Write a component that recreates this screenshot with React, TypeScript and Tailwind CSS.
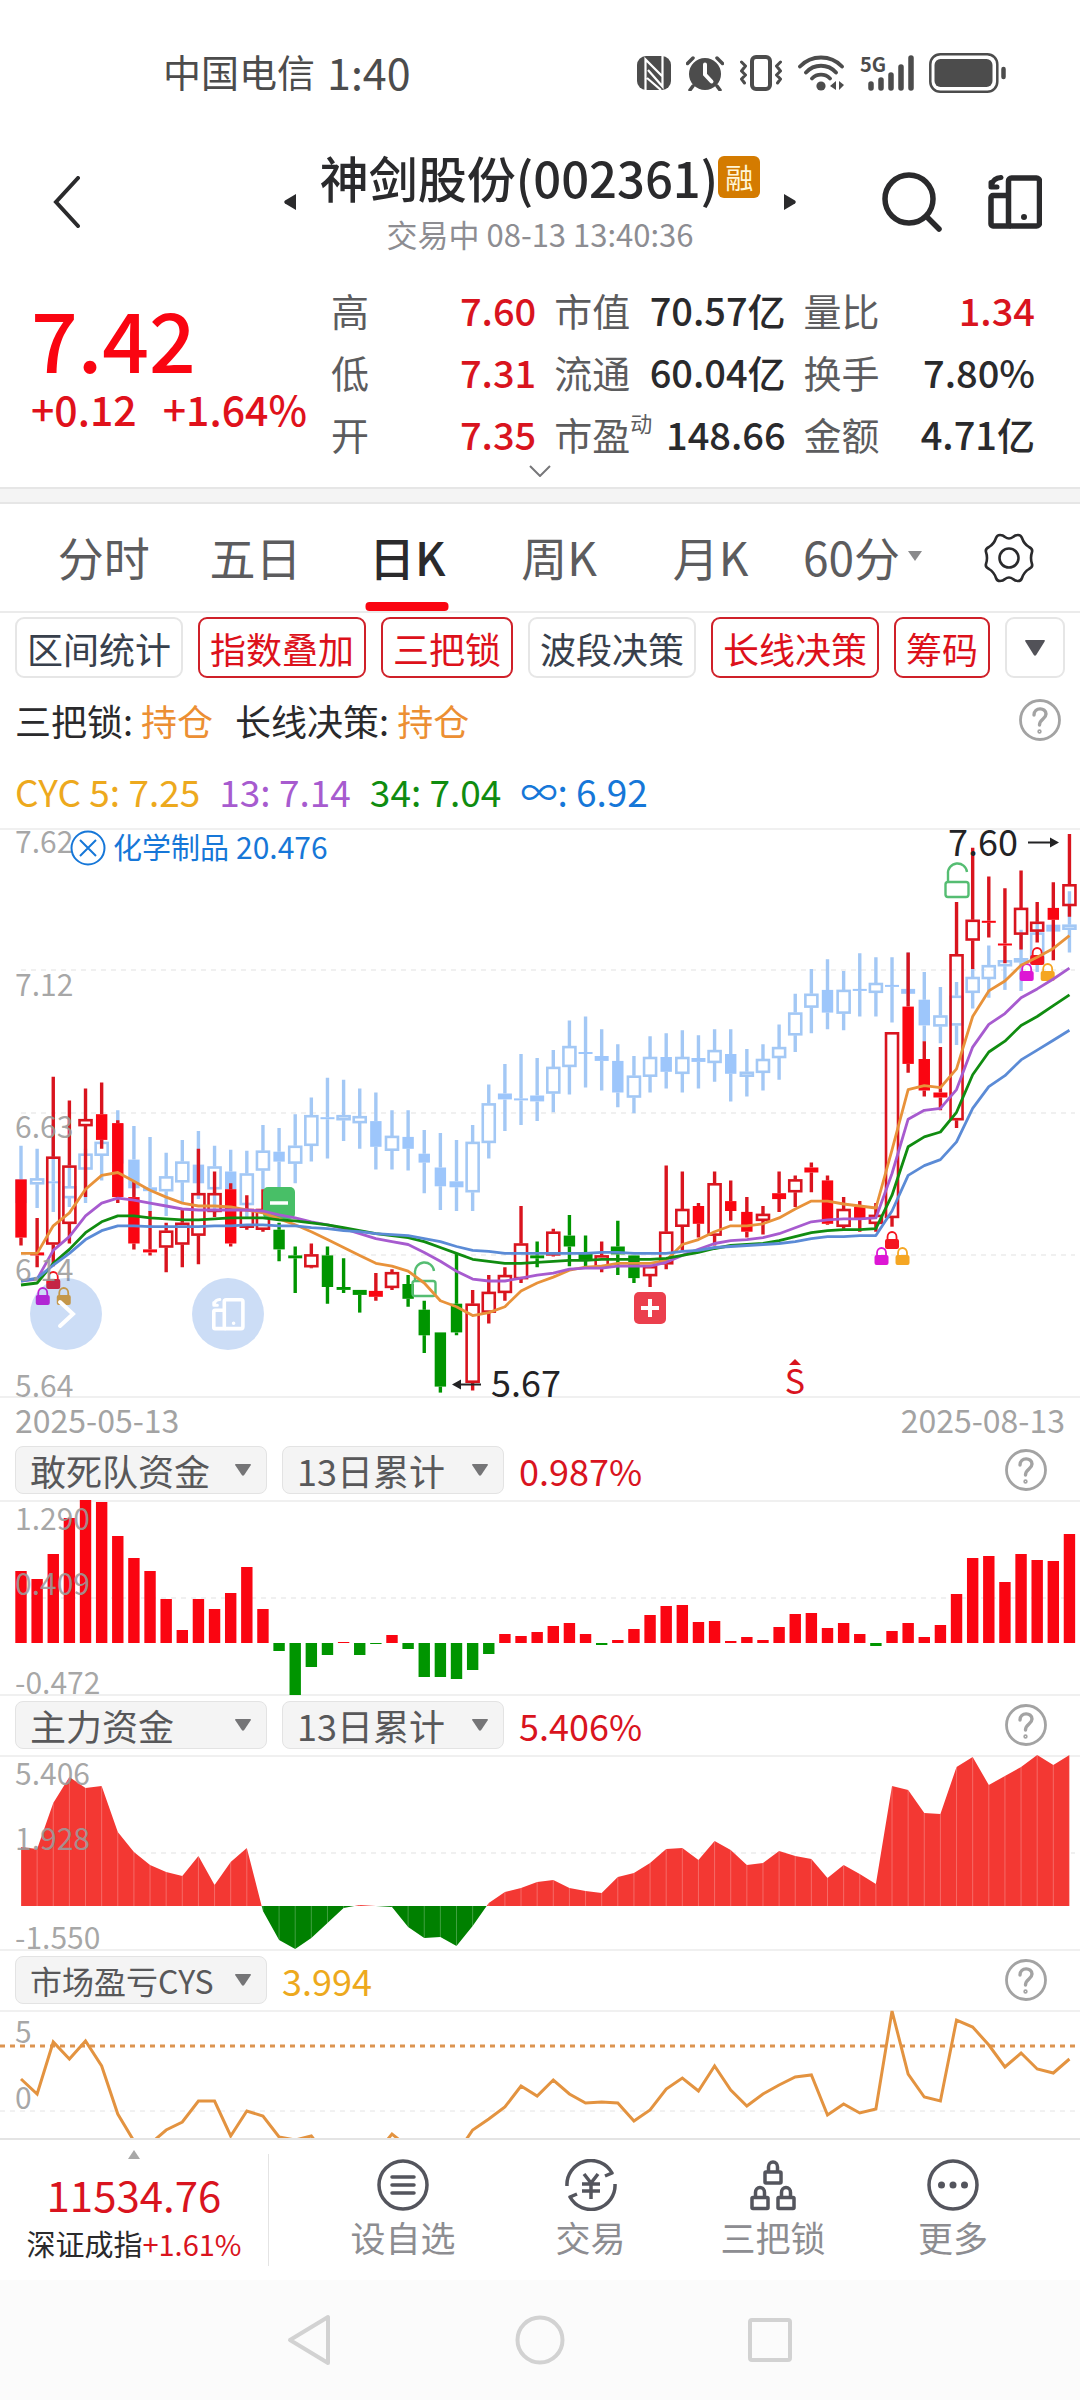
import React from "react";

const RED = "#d9141e";
const HOT = "#fa0511";
const GREEN = "#009500";
const PALE = "#9dc6fb";
const X0 = 21;
const STEP = 16.13;
const cx = (i: number) => X0 + STEP * i;
const PRICE_SCALE = 0.987;
const py = (v: number) => Math.round(v * PRICE_SCALE * 10) / 10;

type Kind = "h" | "f" | "g";
type Candle = [number, number, number, number, Kind];

const stock: Candle[] = [
  [356, 356, 415, 423, "f"], [395, 430, 433, 445, "f"], [252, 333, 422, 444, "h"], [276, 342, 401, 421, "h"],
  [264, 295, 302, 374, "h"], [258, 290, 316, 325, "f"], [296, 299, 374, 380, "f"], [358, 374, 421, 427, "f"],
  [388, 427, 430, 433, "f"], [400, 408, 425, 450, "h"], [386, 400, 422, 445, "h"], [325, 370, 413, 442, "h"],
  [348, 370, 389, 394, "h"], [360, 366, 421, 424, "f"], [372, 386, 405, 407, "h"], [366, 386, 407, 409, "h"],
  [400, 407, 427, 439, "g"], [424, 433, 436, 471, "g"], [421, 432, 445, 446, "h"], [424, 433, 465, 482, "g"],
  [436, 465, 468, 471, "g"], [468, 468, 473, 491, "g"], [451, 469, 475, 479, "f"], [447, 450, 466, 468, "h"],
  [453, 462, 477, 485, "g"], [479, 488, 514, 532, "g"], [511, 511, 566, 572, "g"], [431, 482, 511, 514, "g"],
  [468, 482, 562, 570, "h"], [453, 470, 491, 502, "h"], [445, 453, 471, 479, "h"], [383, 421, 457, 461, "h"],
  [419, 433, 436, 445, "g"], [406, 409, 433, 434, "h"], [392, 413, 424, 444, "g"], [413, 431, 437, 444, "g"],
  [419, 433, 445, 450, "h"], [398, 424, 432, 453, "g"], [433, 433, 456, 461, "g"], [443, 444, 454, 465, "h"],
  [342, 409, 442, 447, "h"], [348, 386, 404, 428, "h"], [380, 383, 401, 415, "f"], [348, 360, 413, 423, "h"],
  [357, 378, 388, 398, "f"], [374, 389, 409, 415, "f"], [383, 391, 398, 412, "h"], [348, 370, 376, 389, "f"],
  [352, 356, 369, 384, "h"], [339, 344, 349, 369, "f"], [352, 357, 401, 402, "f"], [374, 386, 404, 406, "h"],
  [378, 384, 397, 409, "f"], [380, 392, 401, 409, "h"], [207, 207, 395, 404, "h"], [126, 181, 239, 248, "f"],
  [216, 234, 266, 272, "f"], [222, 268, 273, 286, "f"], [75, 128, 296, 304, "h"], [20, 93, 114, 143, "h"],
  [49, 94, 96, 111, "f"], [61, 117, 119, 137, "f"], [43, 81, 108, 123, "h"], [75, 95, 105, 116, "h"],
  [55, 81, 93, 134, "f"], [6, 57, 79, 90, "h"],
];

const sector: Candle[] = [
  [322, 356, 380, 400, "f"], [325, 355, 361, 385, "h"], [300, 358, 360, 389, "f"], [340, 363, 375, 384, "h"],
  [325, 330, 346, 380, "h"], [312, 318, 332, 357, "h"], [286, 300, 340, 360, "f"], [302, 336, 365, 372, "f"],
  [313, 364, 368, 389, "f"], [329, 353, 368, 393, "h"], [316, 338, 359, 380, "h"], [307, 341, 360, 376, "f"],
  [322, 343, 366, 392, "h"], [326, 348, 366, 380, "f"], [327, 350, 382, 396, "h"], [301, 327, 347, 366, "h"],
  [304, 328, 338, 364, "f"], [290, 322, 340, 360, "h"], [273, 291, 322, 338, "h"], [253, 293, 295, 335, "f"],
  [255, 291, 296, 317, "h"], [264, 292, 299, 325, "h"], [268, 297, 323, 346, "f"], [286, 312, 327, 346, "h"],
  [286, 313, 325, 347, "f"], [306, 330, 339, 370, "f"], [309, 344, 363, 387, "f"], [316, 358, 364, 388, "f"],
  [301, 318, 369, 388, "h"], [260, 279, 319, 335, "h"], [239, 269, 275, 307, "f"], [229, 274, 276, 301, "f"],
  [233, 271, 277, 297, "f"], [225, 242, 269, 288, "h"], [195, 221, 242, 270, "h"], [191, 227, 229, 263, "f"],
  [204, 231, 236, 266, "f"], [219, 236, 268, 283, "f"], [231, 251, 273, 289, "h"], [211, 232, 252, 268, "h"],
  [208, 232, 247, 264, "f"], [205, 232, 249, 268, "h"], [210, 233, 237, 264, "f"], [204, 225, 238, 257, "h"],
  [204, 229, 249, 277, "f"], [224, 247, 252, 272, "h"], [219, 234, 248, 266, "h"], [199, 222, 233, 255, "h"],
  [168, 187, 210, 227, "h"], [143, 168, 182, 208, "h"], [133, 164, 187, 204, "f"], [145, 164, 188, 205, "h"],
  [127, 163, 165, 191, "f"], [131, 157, 167, 191, "h"], [131, 159, 161, 197, "f"], [126, 163, 168, 175, "f"],
  [146, 174, 200, 216, "f"], [161, 190, 201, 218, "h"], [156, 170, 200, 220, "h"], [142, 151, 167, 183, "h"],
  [119, 139, 153, 172, "h"], [134, 134, 140, 164, "h"], [103, 132, 136, 165, "h"], [94, 106, 138, 146, "h"],
  [98, 98, 105, 115, "f"], [64, 98, 103, 126, "h"],
];

const averages: { color: string; ys: number[] }[] = [
  {
    color: "#e8923a",
    ys: [431, 431, 403, 390, 366, 352, 349, 358, 367, 374, 380, 383, 383, 384, 387, 390, 396, 402, 409, 417, 425, 433, 441, 444, 449, 461, 479, 485, 494, 491, 485, 469, 461, 455, 448, 445, 444, 441, 441, 441, 438, 422, 417, 409, 403, 403, 401, 395, 386, 378, 378, 381, 383, 385, 326, 265, 261, 263, 244, 191, 165, 155, 139, 131, 122, 109],
  },
  {
    color: "#a75bcf",
    ys: [459, 457, 428, 414, 393, 380, 375, 377, 380, 383, 386, 387, 387, 387, 387, 388, 392, 395, 399, 402, 406, 411, 416, 419, 422, 430, 439, 449, 457, 459, 459, 456, 453, 451, 447, 446, 446, 444, 444, 444, 440, 433, 427, 421, 418, 417, 415, 411, 405, 399, 397, 396, 396, 395, 350, 295, 286, 284, 265, 222, 199, 188, 172, 163, 153, 142],
  },
  {
    color: "#108c10",
    ys: [463, 461, 441, 427, 410, 399, 393, 393, 395, 396, 397, 397, 396, 395, 395, 395, 397, 398, 400, 402, 405, 408, 411, 413, 415, 419, 425, 431, 437, 439, 441, 441, 440, 439, 438, 438, 437, 437, 437, 437, 436, 433, 430, 426, 423, 422, 421, 418, 414, 410, 408, 407, 407, 406, 372, 323, 313, 308, 288, 250, 227, 216, 200, 191, 180, 169],
  },
  {
    color: "#5b8bd6",
    ys: [459, 456, 443, 431, 417, 408, 403, 403, 404, 404, 404, 404, 403, 403, 402, 402, 403, 403, 405, 406, 408, 409, 411, 412, 413, 416, 419, 424, 428, 429, 431, 431, 431, 431, 431, 431, 430, 430, 431, 431, 431, 429, 428, 425, 424, 423, 422, 421, 419, 416, 414, 414, 413, 413, 388, 352, 342, 336, 318, 284, 262, 251, 235, 225, 215, 205],
  },
];

const squadBars = [72, 64, 89, 125, 143, 141, 107, 85, 72, 44, 13, 44, 34, 50, 76, 34, -8, -52, -24, -12, 1, -12, -1, 8, -6, -34, -34, -36, -27, -11, 9, 7, 11, 17, 20, 9, -2, 3, 14, 28, 37, 38, 21, 22, 2, 6, 3, 16, 29, 30, 15, 20, 9, -3, 12, 20, 6, 18, 49, 85, 87, 61, 89, 83, 82, 109];

const mainFunds = [59, 57, 103, 129, 118, 120, 74, 54, 41, 34, 30, 50, 21, 44, 58, -5, -34, -43, -32, -17, -2, 1, 0, -1, -21, -32, -31, -40, -20, 3, 14, 18, 24, 26, 18, 15, 13, 29, 33, 43, 57, 58, 46, 65, 56, 41, 43, 55, 50, 47, 28, 41, 32, 22, 120, 116, 93, 92, 139, 149, 121, 130, 139, 151, 141, 151];

const cys = [69, 84, 32, 49, 31, 56, 104, 131, 134, 120, 112, 91, 91, 126, 101, 106, 127, 130, 126, 147, 147, 147, 144, 124, 137, 150, 150, 144, 120, 109, 97, 76, 86, 70, 84, 93, 92, 93, 111, 100, 79, 68, 81, 56, 80, 96, 84, 75, 67, 65, 105, 94, 103, 99, 1, 64, 87, 91, 10, 17, 35, 57, 43, 59, 63, 49];

const toPoints = (ys: number[]) => ys.map((y, i) => `${cx(i)},${y}`).join(" ");

function Candles({ data, up, solid, down }: { data: Candle[]; up: string; solid: string; down: string }) {
  return (
    <g>
      {data.map(([h, t, b, l, kind], i) => {
        const x = cx(i);
        const hi = py(h);
        const top = py(t);
        const bot = py(b);
        const lo = py(l);
        const line = kind === "g" ? down : up;
        const fill = kind === "g" ? down : solid;
        return (
          <g key={i}>
            <path d={`M${x} ${hi}V${top}M${x} ${bot}V${lo}`} stroke={line} strokeWidth={3.4} />
            {kind === "h" ? (
              <rect x={x - 6} y={top + 1} width={12} height={Math.max(bot - top - 2, 2)} fill="none" stroke={line} strokeWidth={2.6} />
            ) : (
              <rect
                x={x - (bot - top < 8 ? 7 : 5.7)}
                y={top}
                width={bot - top < 8 ? 14 : 11.4}
                height={Math.max(bot - top, 2)}
                fill={fill}
              />
            )}
          </g>
        );
      })}
    </g>
  );
}

function Lock({ x, y, color }: { x: number; y: number; color: string }) {
  return (
    <g>
      <path d={`M${x - 4.5} ${y + 9}V${y + 6}a4.500 5 0 0 1 9 0V${y + 9}`} fill="none" stroke={color} strokeWidth={1.8} />
      <rect x={x - 7} y={y + 8} width={14} height={10} rx={2} fill={color} />
    </g>
  );
}

function LockTrio({ x, y }: { x: number; y: number }) {
  return (
    <g>
      <Lock x={x} y={y} color="#f5141e" />
      <Lock x={x - 10.5} y={y + 16} color="#dd16d4" />
      <Lock x={x + 10.5} y={y + 16} color="#f5a623" />
    </g>
  );
}

function OpenLock({ x, y }: { x: number; y: number }) {
  return (
    <g fill="none" stroke="#55bd72" strokeWidth={2.4}>
      <rect x={x - 11.5} y={y + 18} width={23} height={15} rx={2.5} />
      <path d={`M${x - 9} ${y + 18}V${y + 10}a9.500 9.500 0 0 1 19 -2`} />
    </g>
  );
}

const layoutPaths = (
  <>
    <rect x="20.5" y="3" width="31" height="48" rx="3" />
    <path d="M20 20.500H5a2 2 0 0 0-2 2v26.500a2 2 0 0 0 2 2h18" />
    <path d="M13 2.500C8 3 5 5 4 9M3 7.500v4.500h6" strokeWidth="5" strokeLinecap="round" strokeLinejoin="round" />
    <circle cx="36" cy="42" r="1.500" strokeWidth="3" />
  </>
);

function LayoutIcon() {
  return (
    <svg viewBox="0 0 54 54" className="h-[54px] w-[54px]" fill="none" stroke="#2a2a2c" strokeWidth="5.500">
      {layoutPaths}
    </svg>
  );
}

function AxisLabel({ y, children }: { y: number; children: string }) {
  return (
    <text x={15} y={y} fontSize={30} fill="#9b9b9b" fillOpacity={0.88}>
      {children}
    </text>
  );
}

function MainChart() {
  return (
    <svg viewBox="0 0 1080 570" className="block h-auto w-full overflow-visible" role="img" aria-label="日K线图">
      <path d="M0 1H1080M0 569H1080" stroke="#f0f0f0" strokeWidth={2} />
      <path d="M21 142H1075M21 285H1075M21 427H1075" stroke="#f0f0f0" strokeWidth={2} strokeDasharray="5 5" />
      <Candles data={sector} up="#a3c8f5" solid={PALE} down={PALE} />
      <Candles data={stock} up={RED} solid={HOT} down={GREEN} />
      <rect x={263} y={359} width={32} height={32} rx={5} fill="#48bf67" />
      <path d="M270 375h18" stroke="#fff" strokeWidth={3.5} />
      <OpenLock x={424} y={435} />
      <OpenLock x={957} y={36} />
      <LockTrio x={cx(2)} y={443} />
      <LockTrio x={cx(54)} y={403} />
      <LockTrio x={cx(63)} y={119} />
      {averages.map((a) => (
        <polyline key={a.color} points={toPoints(a.ys.map(py))} fill="none" stroke={a.color} strokeWidth={2.8} strokeLinejoin="round" />
      ))}
      <rect x={634} y={464} width={32} height={32} rx={5} fill="#eb3f4d" />
      <path d="M641 480h18M650 471v18" stroke="#fff" strokeWidth={4} />
      <path d="M795 531l6 6h-12z" fill="#d9141e" />
      <text x={795} y={566} fontSize={34} textAnchor="middle" fill="#d9141e">S</text>
      <AxisLabel y={25}>7.62</AxisLabel>
      <AxisLabel y={168}>7.12</AxisLabel>
      <AxisLabel y={310}>6.63</AxisLabel>
      <AxisLabel y={453}>6.14</AxisLabel>
      <AxisLabel y={569}>5.64</AxisLabel>
      <circle cx={66} cy={486} r={36} fill="#1864d6" fillOpacity={0.22} />
      <path d="M60 474l13 12l-13 12" fill="none" stroke="#fff" strokeWidth={4} strokeLinecap="round" />
      <circle cx={228} cy={486} r={36} fill="#1864d6" fillOpacity={0.22} />
      <g transform="translate(212 470) scale(0.6)" fill="none" stroke="#fff" strokeWidth={6}>
        {layoutPaths}
      </g>
      <g fill="none" stroke="#1677d8" strokeWidth={2}>
        <circle cx={88} cy={20} r={16.5} />
        <path d="M80 12l16 16M96 12l-16 16" />
      </g>
      <text x={113} y={31} fontSize={29} fill="#1677d8">化学制品</text>
      <text x={236} y={31} fontSize={30} fill="#1677d8">20.476</text>
      <g fill="#232325">
        <text x={948} y={28} fontSize={36}>7.60</text>
        <path d="M1028 13.500h22v-4l9 5l-9 5v-4h-22z" />
        <text x={491} y={569} fontSize={36}>5.67</text>
        <path d="M481 557.500h-20v4l-9-5l9-5v4h20z" />
      </g>
    </svg>
  );
}

function Frame({ label, dashY, children }: { label: string; dashY?: number; children: React.ReactNode }) {
  return (
    <svg viewBox="0 0 1080 195" className="block h-auto w-full overflow-visible" role="img" aria-label={label}>
      <path d="M0 1H1080M0 195H1080" stroke="#f0f0f0" strokeWidth={2} />
      {dashY && <path d={`M21 ${dashY}H1075`} stroke="#f0f0f0" strokeWidth={2} strokeDasharray="5 5" />}
      {children}
    </svg>
  );
}

function SquadChart() {
  return (
    <Frame label="敢死队资金" dashY={98}>
      {squadBars.map((v, i) => (
        <rect
          key={i}
          x={cx(i) - 5.7}
          y={v > 0 ? 143 - v : 143}
          width={11.4}
          height={Math.abs(v)}
          fill={v > 0 ? HOT : GREEN}
        />
      ))}
      <AxisLabel y={30}>1.290</AxisLabel>
      <AxisLabel y={95}>0.409</AxisLabel>
      <AxisLabel y={194}>-0.472</AxisLabel>
    </Frame>
  );
}

function FundsChart() {
  const area = `${cx(0)},151 ${mainFunds.map((v, i) => `${cx(i)},${151 - v}`).join(" ")} ${cx(65)},151`;
  return (
    <Frame label="主力资金" dashY={98}>
      <clipPath id="above"><rect x={0} y={0} width={1080} height={151} /></clipPath>
      <clipPath id="below"><rect x={0} y={151} width={1080} height={44} /></clipPath>
      <polygon points={area} fill="#f33833" clipPath="url(#above)" />
      <polygon points={area} fill="#008000" clipPath="url(#below)" />
      {mainFunds.map((v, i) => (
        <path key={i} d={`M${cx(i)} 151V${151 - v}`} stroke="#fff" strokeOpacity={0.25} strokeWidth={1} />
      ))}
      <AxisLabel y={30}>5.406</AxisLabel>
      <AxisLabel y={95}>1.928</AxisLabel>
      <AxisLabel y={194}>-1.550</AxisLabel>
    </Frame>
  );
}

function CysChart() {
  return (
    <svg viewBox="0 0 1080 128" className="block h-auto w-full" role="img" aria-label="市场盈亏CYS">
      <path d="M0 1H1080" stroke="#f0f0f0" strokeWidth={2} />
      <path d="M0 101H1075" stroke="#e4e4e4" strokeWidth={1} strokeDasharray="5 5" />
      <AxisLabel y={33}>5</AxisLabel>
      <AxisLabel y={99}>0</AxisLabel>
      <path d="M0 36H1075" stroke="#dc9450" strokeWidth={3} strokeDasharray="5 5" />
      <polyline points={toPoints(cys)} fill="none" stroke="#e39340" strokeWidth={3} />
    </svg>
  );
}

function HelpButton() {
  return (
    <button type="button" aria-label="帮助" className="shrink-0">
      <svg viewBox="0 0 42 42" className="h-[42px] w-[42px]" fill="none" stroke="#a3a3a3" strokeWidth="2.800">
        <circle cx="21" cy="21" r="19.500" />
        <path d="M15 16c0-8 12-8 12-1 0 5-6.500 5-6.500 11" strokeWidth="3.400" strokeLinecap="round" />
        <circle cx="20.500" cy="32.500" r="0.800" />
      </svg>
    </button>
  );
}

function Picker({ label, options, wide, small }: { label: string; options: string[]; wide?: boolean; small?: boolean }) {
  return (
    <div className={wide ? "relative w-[252px]" : "relative w-[222px]"}>
      <select
        aria-label={label}
        className={`block h-12 w-full appearance-none rounded-lg border border-[#e3e3e3] bg-[#f4f4f4] pl-[14px] leading-[46px] text-[#58585a] ${small ? "text-[32px]" : "text-[36px]"}`}
      >
        {options.map((o) => (
          <option key={o}>{o}</option>
        ))}
      </select>
      <svg viewBox="0 0 16 12" className="pointer-events-none absolute top-[18px] right-4 h-3 w-4" fill="#757577">
        <path d="M1 0h14q1.500 0 .7 1.300l-6.500 9.700q-1.200 1.500-2.400 0L.3 1.300Q-.5 0 1 0z" />
      </svg>
    </div>
  );
}

function PanelHeader({ children, value, tone }: { children: React.ReactNode; value: string; tone: string }) {
  return (
    <div className="flex h-[60px] items-center pr-[33px] pl-[15px]">
      <div className="flex gap-[15px]">{children}</div>
      <span className={`ml-[15px] flex-1 text-[36px] leading-[52px] ${tone}`}>{value}</span>
      <HelpButton />
    </div>
  );
}

function StatusBar() {
  return (
    <div className="flex h-[146px] items-center justify-between pr-[74px] pl-[163px] text-[#4c4c4c]">
      <div className="flex items-center gap-3 pb-1 leading-[60px]">
        <span className="text-[38px]">中国电信</span>
        <span className="text-[43px]">1:40</span>
      </div>
      <div className="flex items-center gap-[15px]">
        <svg viewBox="0 0 34 34" className="h-[34px] w-[34px]">
          <rect width="34" height="34" rx="9" fill="#4c4c4c" />
          <path d="M8.500 34V3.500L25 20M25.500 0v30.500L11 14M10 22l14 12" fill="none" stroke="#fff" strokeWidth="2.200" />
        </svg>
        <svg viewBox="0 0 38 36" className="h-9 w-[38px]">
          <circle cx="19" cy="19" r="16" fill="#4c4c4c" />
          <path d="M1.500 8.500L7 3M36.500 8.500L31 3M7 31l-3 4M31 31l3 4" stroke="#4c4c4c" strokeWidth="3.500" strokeLinecap="round" />
          <path d="M19 9.500v10l6.500 7" fill="none" stroke="#fff" strokeWidth="4" strokeLinecap="round" />
        </svg>
        <svg viewBox="0 0 44 36" className="h-9 w-11" fill="none" stroke="#4c4c4c">
          <rect x="13" y="2" width="18" height="32" rx="4" strokeWidth="4" />
          <path d="M2.500 7l4 4-4 5 4 4-4 4 3 4M41.500 7l-4 4 4 5-4 4 4 4-3 4" strokeWidth="3" strokeLinecap="round" strokeLinejoin="round" />
        </svg>
        <svg viewBox="0 0 47 36" className="h-9 w-[47px]" fill="none" stroke="#4c4c4c" strokeWidth="3.800" strokeLinecap="round">
          <path d="M2 11.500a29 29 0 0 1 42 0M8 17.500a20 20 0 0 1 30 0M14 23.500a12.500 12.500 0 0 1 18 0" />
          <circle cx="23" cy="31" r="4.600" fill="#4c4c4c" stroke="none" />
          <path d="M38 26v9l-6-4zM41 26v9l5-5z" fill="#4c4c4c" stroke="none" />
        </svg>
        <svg viewBox="0 0 54 36" className="h-9 w-[54px] overflow-visible" fill="none" stroke="#4c4c4c" strokeWidth="5.500" strokeLinecap="round">
          <text x="0" y="17" fontSize="20" fontWeight="bold" fill="#4c4c4c" stroke="none">5G</text>
          <path d="M11 29v4M21 25v8M31 20v13M41 12v21M51 3v30" />
        </svg>
        <svg viewBox="0 0 77 40" className="h-10 w-[77px]">
          <rect x="1.300" y="1.300" width="67" height="37.400" rx="10" fill="none" stroke="#4c4c4c" strokeWidth="2.500" />
          <rect x="5.500" y="6" width="58" height="28" rx="6" fill="#4c4c4c" />
          <path d="M74.500 16v8" stroke="#4c4c4c" strokeWidth="4.500" strokeLinecap="round" />
        </svg>
      </div>
    </div>
  );
}

function Header() {
  return (
    <header className="grid h-28 grid-cols-[1fr_auto_1fr] items-center px-[38px]">
      <button type="button" aria-label="返回" className="ml-[14px] justify-self-start">
        <svg viewBox="0 0 28 52" className="h-[52px] w-7" fill="none" stroke="#2a2a2c" strokeWidth="4" strokeLinecap="round">
          <path d="M26 2L4 26l22 24" />
        </svg>
      </button>
      <div className="flex items-center gap-6">
        <button type="button" aria-label="上一只">
          <svg viewBox="0 0 12 16" className="h-4 w-3" fill="#2a2a2c"><path d="M12 0v16L1 9.500q-1.500-1.500 0-3z" /></svg>
        </button>
        <div className="flex flex-col items-center">
          <h1 className="flex items-center text-[49px] leading-[60px] font-medium whitespace-nowrap text-[#2a2a2c]">
            神剑股份(002361)
            <span className="flex h-[42px] w-[42px] items-center justify-center rounded-md bg-[#d47b00] text-[28px] leading-[42px] font-normal text-[#fff6d8]">融</span>
          </h1>
          <p className="mt-1 text-[31px] leading-[46px] text-[#8d8d92]">交易中 08-13 13:40:36</p>
        </div>
        <button type="button" aria-label="下一只">
          <svg viewBox="0 0 12 16" className="h-4 w-3" fill="#2a2a2c"><path d="M0 0v16l11-6.500q1.500-1.500 0-3z" /></svg>
        </button>
      </div>
      <div className="flex items-center gap-[46px] justify-self-end">
        <button type="button" aria-label="搜索">
          <svg viewBox="0 0 60 60" className="h-[60px] w-[60px]" fill="none" stroke="#2a2a2c" strokeWidth="5.500" strokeLinecap="round">
            <circle cx="27" cy="27" r="24" />
            <path d="M45 45l12 12" />
          </svg>
        </button>
        <button type="button" aria-label="布局"><LayoutIcon /></button>
      </div>
    </header>
  );
}

function Stat({ label, sup, value, up }: { label: string; sup?: string; value: string; up?: boolean }) {
  return (
    <div className="flex h-[62px] items-center justify-between text-[38px] leading-[56px] whitespace-nowrap">
      <dt className="flex text-[#5c5c5e]">
        {label}
        {sup && <sup className="top-0 text-[22px] leading-[32px]">{sup}</sup>}
      </dt>
      <dd className={up ? "font-medium text-[#d9141e]" : "font-medium text-[#2a2a2c]"}>{value}</dd>
    </div>
  );
}

function Quote() {
  return (
    <section className="pt-[21px]">
      <div className="flex pr-[45px] pl-[31px]">
        <div className="w-[300px] shrink-0 pt-[11px] font-medium whitespace-nowrap">
          <p className="text-[82px] leading-[96px] text-[#fa0511]">7.42</p>
          <p className="-mt-2 flex gap-[26px] text-[41px] leading-[60px] text-[#e0111b]">
            <span>+0.12</span>
            <span>+1.64%</span>
          </p>
        </div>
        <dl className="grid flex-1 grid-cols-[204fr_230fr_230fr] gap-x-[18px]">
          <Stat label="高" value="7.60" up />
          <Stat label="市值" value="70.57亿" />
          <Stat label="量比" value="1.34" up />
          <Stat label="低" value="7.31" up />
          <Stat label="流通" value="60.04亿" />
          <Stat label="换手" value="7.80%" />
          <Stat label="开" value="7.35" up />
          <Stat label="市盈" sup="动" value="148.66" />
          <Stat label="金额" value="4.71亿" />
        </dl>
      </div>
      <button type="button" aria-label="展开" className="mx-auto flex h-[22px] items-start">
        <svg viewBox="0 0 22 12" className="block h-3 w-[22px]" fill="none" stroke="#77777a" strokeWidth="2"><path d="M1 1l10 10L21 1" /></svg>
      </button>
    </section>
  );
}

function Tabs() {
  const tabs = ["分时", "五日", "日K", "周K", "月K"];
  return (
    <nav className="grid h-[109px] grid-cols-[repeat(6,152fr)_142fr] border-b-2 border-[#ebebeb] pl-[28px] text-[46px] leading-[68px] text-[#5c5c5e]">
      {tabs.map((t) => (
        <button
          key={t}
          type="button"
          className={t === "日K" ? "relative pb-[3px] font-medium text-[#2a2a2c]" : "pb-[3px]"}
        >
          {t}
          {t === "日K" && <span className="absolute bottom-0 left-1/2 h-[9px] w-[83px] -translate-x-1/2 rounded-[4px] bg-[#fa0511]" />}
        </button>
      ))}
      <button type="button" className="flex items-center justify-center gap-2 pb-[3px] whitespace-nowrap">
        60分
        <svg viewBox="0 0 14 10" className="h-[10px] w-[14px]" fill="#8a8a8c"><path d="M0 0h14L7 10z" /></svg>
      </button>
      <button type="button" aria-label="设置" className="flex items-center justify-center">
        <svg viewBox="0 0 50 50" className="h-[50px] w-[50px]" fill="none" stroke="#2a2a2c" strokeWidth="2.600" strokeLinejoin="round">
          <path d="M16 2Q13 2 12 5Q10 11 5 14Q1 16 2 19Q4 25 2 31Q1 34 5 36Q10 39 12 45Q13 48 16 48Q19 48 21 46Q25 43 29 46Q31 48 34 48Q37 48 38 45Q40 39 45 36Q49 34 48 31Q46 25 48 19Q49 16 45 14Q40 11 38 5Q37 2 34 2Q31 2 29 4Q25 7 21 4Q19 2 16 2z" />
          <circle cx="25" cy="25" r="9.500" />
        </svg>
      </button>
    </nav>
  );
}

const chips = [
  { name: "区间统计", on: false },
  { name: "指数叠加", on: true },
  { name: "三把锁", on: true },
  { name: "波段决策", on: false },
  { name: "长线决策", on: true },
  { name: "筹码", on: true },
];

function Chips() {
  return (
    <div className="flex gap-[15px] px-[15px] pt-1 whitespace-nowrap">
      {chips.map((c) => (
        <button
          key={c.name}
          type="button"
          aria-pressed={c.on}
          className={`h-[61px] rounded-[9px] border-2 px-[10px] text-[36px] leading-[54px] ${c.on ? "border-[#cf2029] text-[#dd111b]" : "border-[#e6e6e6] text-[#38404c]"}`}
        >
          {c.name}
        </button>
      ))}
      <button type="button" aria-label="更多指标" className="flex h-[61px] flex-1 items-center justify-center rounded-[9px] border-2 border-[#e6e6e6]">
        <svg viewBox="0 0 20 16" className="h-4 w-5" fill="#525258"><path d="M1 0h18q1.500 0 .6 1.600L11.200 15q-1.200 1.500-2.400 0L.4 1.600Q-.5 0 1 0z" /></svg>
      </button>
    </div>
  );
}

function BottomBar() {
  const items = [
    {
      label: "设自选",
      icon: (
        <>
          <circle cx="26" cy="26" r="24" />
          <path d="M15 18h22M15 26h22M15 34h22" strokeLinecap="round" />
        </>
      ),
    },
    {
      label: "交易",
      icon: (
        <>
          <path d="M2 27A24 24 0 0 1 47 14l-7 3M50 25A24 24 0 0 1 5 38l7-3" strokeLinejoin="round" />
          <path d="M19 15l7 9 7-9M26 24v16M17 25h18M17 32h18" />
        </>
      ),
    },
    {
      label: "三把锁",
      icon: (
        <>
          <rect x="18" y="13" width="16" height="11" rx="1" />
          <path d="M21.500 13V8a4.500 5 0 0 1 9 0v5" />
          <rect x="5" y="38.500" width="16" height="11" rx="1" />
          <path d="M8.500 38.500v-5a4.500 5 0 0 1 9 0v5" />
          <rect x="31" y="38.500" width="16" height="11" rx="1" />
          <path d="M34.500 38.500v-5a4.500 5 0 0 1 9 0v5" />
        </>
      ),
    },
    {
      label: "更多",
      icon: (
        <>
          <circle cx="26" cy="26" r="24" />
          <g fill="#54555d" stroke="none">
            <circle cx="14.500" cy="26" r="3.500" />
            <circle cx="26" cy="26" r="3.500" />
            <circle cx="37.500" cy="26" r="3.500" />
          </g>
        </>
      ),
    },
  ];
  return (
    <footer className="flex h-[142px] border-t-2 border-[#e4e4e4]">
      <button type="button" className="my-[14px] flex w-[269px] shrink-0 flex-col items-center border-r border-[#e4e4e4] text-[#d9141e]">
        <svg viewBox="0 0 12 9" className="-mt-1 h-[9px] w-3 shrink-0" fill="#a8a8a8"><path d="M6 0l6 9H0z" /></svg>
        <span className="mt-1 text-[42px] leading-[62px]">11534.76</span>
        <span className="-mt-1 text-[29px] leading-[44px] whitespace-nowrap">
          <span className="text-[#2a2a2c]">深证成指</span>+1.61%
        </span>
      </button>
      <nav className="grid flex-1 grid-cols-[190fr_185fr_180fr_180fr] pr-[37px] pl-[39px]">
        {items.map((it) => (
          <button key={it.label} type="button" className="flex flex-col items-center pt-[19px] text-[35px] leading-[52px] text-[#8d8d91]">
            <svg viewBox="0 0 52 52" className="h-[52px] w-[52px]" fill="none" stroke="#54555d" strokeWidth="3.500">{it.icon}</svg>
            <span>{it.label}</span>
          </button>
        ))}
      </nav>
    </footer>
  );
}

function SystemNav() {
  return (
    <div className="bg-[#fbfbfb]">
      <div className="mx-auto grid h-[120px] w-[690px] grid-cols-3 items-center">
        <button type="button" aria-label="系统返回" className="flex justify-center">
          <svg viewBox="0 0 46 52" className="h-[52px] w-[46px]" fill="none" stroke="#d2d2d2" strokeWidth="4" strokeLinejoin="round"><path d="M41 3v46L3 26z" /></svg>
        </button>
        <button type="button" aria-label="主屏幕" className="flex justify-center">
          <svg viewBox="0 0 50 50" className="h-[50px] w-[50px]" fill="none" stroke="#d2d2d2" strokeWidth="4"><circle cx="25" cy="25" r="22.500" /></svg>
        </button>
        <button type="button" aria-label="最近任务" className="flex justify-center">
          <svg viewBox="0 0 46 46" className="h-[46px] w-[46px]" fill="none" stroke="#d2d2d2" strokeWidth="4"><rect x="3" y="3" width="40" height="40" rx="2" /></svg>
        </button>
      </div>
    </div>
  );
}

export default function App() {
  return (
    <div className="min-h-screen bg-white font-['Noto_Sans_CJK_SC',sans-serif]">
      <StatusBar />
      <Header />
      <Quote />
      <div className="h-[17px] border-y-2 border-[#e6e6e6] bg-[#f4f4f4]" />
      <Tabs />
      <Chips />
      <div className="flex h-[84px] items-center pr-[19px] pl-[15px] text-[36px] leading-[54px] text-[#2a2a2c]">
        <p className="flex flex-1 gap-[22px]">
          <span>三把锁: <span className="text-[#ec8f33]">持仓</span></span>
          <span>长线决策: <span className="text-[#ec8f33]">持仓</span></span>
        </p>
        <HelpButton />
      </div>
      <p className="flex h-[66px] items-center gap-[19px] px-[15px] pb-2 text-[37px] leading-[54px]">
        <span className="text-[#eda91d]">CYC 5: 7.25</span>
        <span className="text-[#a75bcf]">13: 7.14</span>
        <span className="text-[#108c10]">34: 7.04</span>
        <span className="text-[#1677d8]">∞: 6.92</span>
      </p>
      <MainChart />
      <div className="flex h-[42px] items-center justify-between px-[15px] text-[32px] leading-[42px] text-[#a3a3a3]">
        <span>2025-05-13</span>
        <span>2025-08-13</span>
      </div>
      <PanelHeader value="0.987%" tone="text-[#d9141e]">
        <Picker wide label="指标一" options={["敢死队资金"]} />
        <Picker label="周期一" options={["13日累计"]} />
      </PanelHeader>
      <SquadChart />
      <PanelHeader value="5.406%" tone="text-[#d9141e]">
        <Picker wide label="指标二" options={["主力资金"]} />
        <Picker label="周期二" options={["13日累计"]} />
      </PanelHeader>
      <FundsChart />
      <PanelHeader value="3.994" tone="text-[#eda91d]">
        <Picker wide small label="指标三" options={["市场盈亏CYS"]} />
      </PanelHeader>
      <CysChart />
      <BottomBar />
      <SystemNav />
    </div>
  );
}
